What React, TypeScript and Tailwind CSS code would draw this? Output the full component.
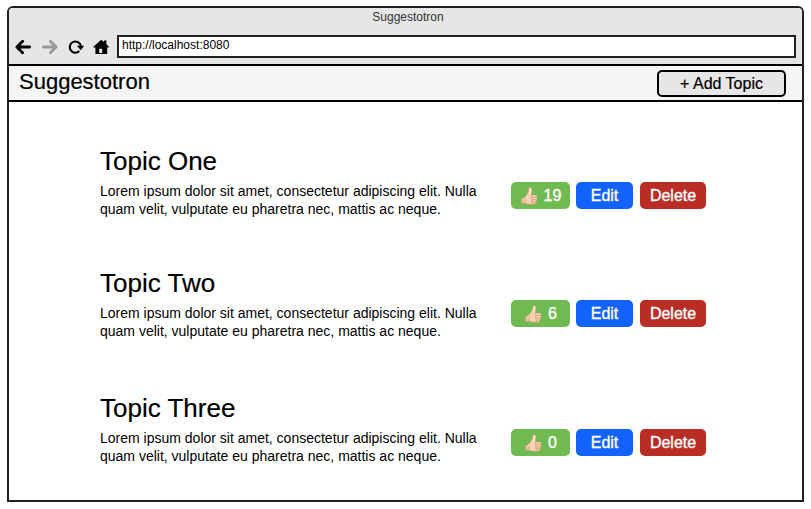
import React from "react";

type Topic = { title: string; votes: number; rowClass: string; actionsClass: string };

const topics: Topic[] = [
  { title: "Topic One", votes: 19, rowClass: "mt-[43px] h-[122px]", actionsClass: "mt-[37px]" },
  { title: "Topic Two", votes: 6, rowClass: "h-[125px]", actionsClass: "mt-[33px]" },
  { title: "Topic Three", votes: 0, rowClass: "h-[90px]", actionsClass: "mt-[37px]" },
];

function BackIcon() {
  return (
    <svg className="h-4 w-4" viewBox="0 0 16 16" fill="none" stroke="#000" strokeWidth="2.8" strokeLinecap="round" strokeLinejoin="round">
      <path d="M7.6 2.2 1.9 8l5.7 5.8M2.4 8h12.2" />
    </svg>
  );
}

function ForwardIcon() {
  return (
    <svg className="h-4 w-4" viewBox="0 0 16 16" fill="none" stroke="#999" strokeWidth="2.8" strokeLinecap="round" strokeLinejoin="round">
      <path d="M8.4 2.2 14.1 8l-5.7 5.8M13.6 8H1.4" />
    </svg>
  );
}

function ReloadIcon() {
  return (
    <svg className="h-4 w-4" viewBox="0 0 16 16">
      <path d="M11.3 12.1A5.6 5.6 0 1 1 12.9 7.2" fill="none" stroke="#000" strokeWidth="2.1" />
      <path d="M9 6.7h7.2l-3.5 4.5z" fill="#000" />
    </svg>
  );
}

function HomeIcon() {
  return (
    <svg className="h-4 w-4" viewBox="0 0 16 16">
      <path d="M8.2.7 10.9 3V1.4h2.5v3.7l2.4 2.7v.8h-1.6V15H2.4V8.6H.4v-.8z" fill="#000" />
      <path d="M6.2 9.7h3v4.3h-3z" fill="#e6e6e6" />
    </svg>
  );
}

function ThumbIcon() {
  return (
    <svg className="h-[18px] w-[17px] shrink-0" viewBox="0 0 18 18" preserveAspectRatio="none">
      <path d="M.5 11.8C2.2 11.6 3.8 10.6 5 9.1c1.4-1.8 2.6-3.6 3-5.8.2-1.4.1-2.6 1.2-2.7 1.8 0 2.5 1.7 2.1 3.5L10.8 8h4.9c1.4 0 1.9 1.8.7 2.4 1.1.6.9 2-.1 2.4.7.8.3 2-.7 2.2.3 1.2-.4 2.2-1.7 2.2H8.2c-1.6 0-2.6-.8-4-.9H.5z" fill="#f6d3b0" stroke="#c69370" strokeWidth=".5" />
      <path d="M.8 13.4c2.2-.3 3.5-1 4.9-2.4l-.8 5-4.1-.1z" fill="#e9b993" />
      <path d="M9.5 1.5c.8.3 1.1 1 .9 2L9.4 7.5" fill="none" stroke="#fff0dc" strokeWidth="1.2" />
      <path d="M16.3 10.4h-4.5c-1-.3-1.2-1-1-1.9M16.2 12.8h-4.4c-.8-.2-.9-1.2-.2-2M15.6 15h-3.5c-.8-.3-.8-1.3-.2-2.1M12.3 17c-.8-.3-.8-1.2-.3-1.9" fill="none" stroke="#c58d6b" strokeWidth=".7" />
    </svg>
  );
}

function TopicRow({ topic }: { topic: Topic }) {
  return (
    <article className={`flex pl-[91px] ${topic.rowClass}`}>
      <div className="w-[411px] shrink-0">
        <h2 className="text-[26px] leading-8 [-webkit-text-stroke:0.2px_black]">{topic.title}</h2>
        <p className="mt-[5px] text-[14px] leading-[18px] whitespace-nowrap">
          Lorem ipsum dolor sit amet, consectetur adipiscing elit. Nulla
          <br />
          quam velit, vulputate eu pharetra nec, mattis ac neque.
        </p>
      </div>
      <div className={`flex h-[27px] text-base leading-[27px] text-white [-webkit-text-stroke:0.35px_white] ${topic.actionsClass}`}>
        <button className="flex w-[59px] items-center justify-center gap-[6px] rounded-[5px] bg-[#70bb51] pl-[1px]">
          <ThumbIcon />
          <span>{topic.votes}</span>
        </button>
        <button className="ml-[6px] w-[57px] rounded-[5px] bg-[#1263fb]">Edit</button>
        <button className="ml-[7px] w-[66px] rounded-[5px] bg-[#b92d25]">Delete</button>
      </div>
    </article>
  );
}

export default function App() {
  return (
    <div className="h-[509px] w-[811px] bg-white pt-[6px] pl-[7px] font-['Liberation_Sans',Arial,sans-serif] text-black">
      <div className="h-[496px] w-[797px] overflow-hidden rounded-t-[6px] border-2 border-[#231f20]">
        <div className="flex h-14 flex-col bg-[#e6e6e6]">
          <div className="pl-[5px] text-center text-[12px] leading-[18px] text-[#333]">Suggestotron</div>
          <div className="mt-[9px] flex items-center pl-[6px]">
            <BackIcon />
            <span className="ml-[11px] flex"><ForwardIcon /></span>
            <span className="ml-[10px] flex"><ReloadIcon /></span>
            <span className="ml-[9px] flex"><HomeIcon /></span>
            <div className="ml-[8px] h-[23px] w-[679px] border-2 border-[#231f20] bg-white pl-[3px] text-[12px] leading-4">
              http://localhost:8080
            </div>
          </div>
        </div>
        <header className="flex h-[38px] items-center justify-between border-y-2 border-black bg-[#f5f5f5] pr-4 pl-[10px]">
          <h1 className="pb-[3px] text-[22px] leading-7 [-webkit-text-stroke:0.2px_black]">Suggestotron</h1>
          <button className="h-[27px] w-[129px] rounded-[5px] border-2 border-black bg-[#e6e6e6] text-base leading-[23px] [-webkit-text-stroke:0.2px_black]">
            + Add Topic
          </button>
        </header>
        <main>
          {topics.map((topic) => (
            <TopicRow key={topic.title} topic={topic} />
          ))}
        </main>
      </div>
    </div>
  );
}
